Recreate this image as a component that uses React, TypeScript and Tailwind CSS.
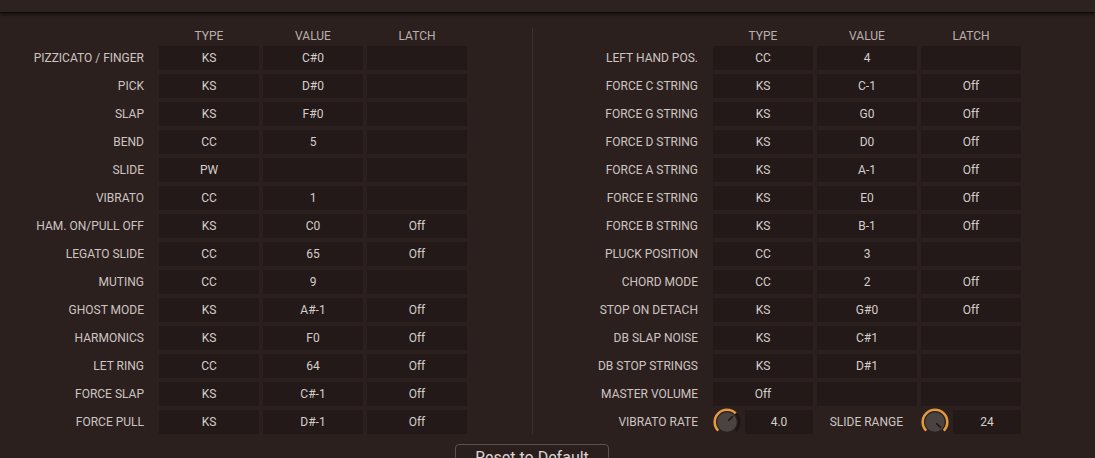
import React from "react";

type Row = { label: string; type: string; value: string; latch: string };

const leftRows: Row[] = [
  { label: "PIZZICATO / FINGER", type: "KS", value: "C#0", latch: "" },
  { label: "PICK", type: "KS", value: "D#0", latch: "" },
  { label: "SLAP", type: "KS", value: "F#0", latch: "" },
  { label: "BEND", type: "CC", value: "5", latch: "" },
  { label: "SLIDE", type: "PW", value: "", latch: "" },
  { label: "VIBRATO", type: "CC", value: "1", latch: "" },
  { label: "HAM. ON/PULL OFF", type: "KS", value: "C0", latch: "Off" },
  { label: "LEGATO SLIDE", type: "CC", value: "65", latch: "Off" },
  { label: "MUTING", type: "CC", value: "9", latch: "" },
  { label: "GHOST MODE", type: "KS", value: "A#-1", latch: "Off" },
  { label: "HARMONICS", type: "KS", value: "F0", latch: "Off" },
  { label: "LET RING", type: "CC", value: "64", latch: "Off" },
  { label: "FORCE SLAP", type: "KS", value: "C#-1", latch: "Off" },
  { label: "FORCE PULL", type: "KS", value: "D#-1", latch: "Off" },
];

const rightRows: Row[] = [
  { label: "LEFT HAND POS.", type: "CC", value: "4", latch: "" },
  { label: "FORCE C STRING", type: "KS", value: "C-1", latch: "Off" },
  { label: "FORCE G STRING", type: "KS", value: "G0", latch: "Off" },
  { label: "FORCE D STRING", type: "KS", value: "D0", latch: "Off" },
  { label: "FORCE A STRING", type: "KS", value: "A-1", latch: "Off" },
  { label: "FORCE E STRING", type: "KS", value: "E0", latch: "Off" },
  { label: "FORCE B STRING", type: "KS", value: "B-1", latch: "Off" },
  { label: "PLUCK POSITION", type: "CC", value: "3", latch: "" },
  { label: "CHORD MODE", type: "CC", value: "2", latch: "Off" },
  { label: "STOP ON DETACH", type: "KS", value: "G#0", latch: "Off" },
  { label: "DB SLAP NOISE", type: "KS", value: "C#1", latch: "" },
  { label: "DB STOP STRINGS", type: "KS", value: "D#1", latch: "" },
  { label: "MASTER VOLUME", type: "Off", value: "", latch: "" },
];

function Cell({ children, w = "w-[100px]" }: { children?: React.ReactNode; w?: string }) {
  return (
    <div className={`${w} h-[24px] flex items-center justify-center bg-[#221918] text-[12px] text-[#d6cecb]`}>
      {children}
    </div>
  );
}

// arc angle measured clockwise from 12 o'clock, range -135..135
function Knob({ frac }: { frac: number }) {
  const c = 14;
  const r = 12.3;
  const pt = (deg: number, rad: number) => {
    const a = (deg * Math.PI) / 180;
    return [c + rad * Math.sin(a), c - rad * Math.cos(a)];
  };
  const end = -135 + 270 * frac;
  const [sx, sy] = pt(-135, r);
  const [ex, ey] = pt(end, r);
  const [tx, ty] = pt(135, r);
  const large = end - -135 > 180 ? 1 : 0;
  const [l1x, l1y] = pt(end, 2.5);
  const [l2x, l2y] = pt(end, 7.5);
  return (
    <svg width="28" height="28" viewBox="0 0 28 28" className="shrink-0">
      <path d={`M ${sx} ${sy} A ${r} ${r} 0 1 1 ${tx} ${ty}`} fill="none" stroke="#1e1615" strokeWidth="2.6" />
      <path d={`M ${sx} ${sy} A ${r} ${r} 0 ${large} 1 ${ex} ${ey}`} fill="none" stroke="#e2993f" strokeWidth="2.6" strokeLinecap="butt" />
      <circle cx={c} cy={c} r="9.8" fill="#4a4341" />
      <line x1={l1x} y1={l1y} x2={l2x} y2={l2y} stroke="#1a1312" strokeWidth="1.6" strokeLinecap="round" />
    </svg>
  );
}

function Header({ labelW }: { labelW: string }) {
  return (
    <div className="flex h-[16px] items-center text-[12px] text-[#b9b1ae]">
      <div className={`${labelW} mr-[15px]`} />
      <div className="flex gap-[4px]">
        <div className="w-[100px] text-center">TYPE</div>
        <div className="w-[100px] text-center">VALUE</div>
        <div className="w-[100px] text-center">LATCH</div>
      </div>
    </div>
  );
}

function TableRow({ row, labelW }: { row: Row; labelW: string }) {
  return (
    <div className="flex h-[24px] items-center">
      <div className={`${labelW} mr-[15px] text-right text-[12px] text-[#cdc5c2] whitespace-nowrap`}>{row.label}</div>
      <div className="flex gap-[4px]">
        <Cell>{row.type}</Cell>
        <Cell>{row.value}</Cell>
        <Cell>{row.latch}</Cell>
      </div>
    </div>
  );
}

export default function App() {
  return (
    <div
      className="h-[458px] w-[1095px] overflow-hidden bg-[#2b201e]"
      style={{ fontFamily: "Roboto, 'Liberation Sans', sans-serif" }}
    >
      <div className="h-[13px] bg-[#2c2220] border-b-[1.5px] border-[#0f0908] shadow-[0_2px_3px_rgba(0,0,0,0.45)]" />
      <div className="flex pt-[15px]">
        {/* left table */}
        <div className="flex flex-col w-[467px]">
          <Header labelW="w-[144px]" />
          <div className="mt-[2px] flex flex-col gap-[4px]">
            {leftRows.map((r) => (
              <TableRow key={r.label} row={r} labelW="w-[144px]" />
            ))}
          </div>
        </div>
        <div className="ml-[65px] w-px bg-[#3b302e]" />
        {/* right table */}
        <div className="flex flex-col pl-[7px]">
          <Header labelW="w-[158px]" />
          <div className="mt-[2px] flex flex-col gap-[4px]">
            {rightRows.map((r) => (
              <TableRow key={r.label} row={r} labelW="w-[158px]" />
            ))}
            <div className="flex h-[24px] items-center">
              <div className="w-[158px] mr-[15px] text-right text-[12px] text-[#cdc5c2] whitespace-nowrap">VIBRATO RATE</div>
              <div className="flex items-center gap-[4px]">
                <div className="flex w-[100px] items-center gap-[4px]">
                  <Knob frac={0.667} />
                  <Cell w="w-[68px]">4.0</Cell>
                </div>
                <div className="w-[100px] pr-[14px] text-right text-[12px] text-[#cdc5c2] whitespace-nowrap">SLIDE RANGE</div>
                <div className="flex w-[100px] items-center gap-[4px]">
                  <Knob frac={1} />
                  <Cell w="w-[68px]">24</Cell>
                </div>
              </div>
            </div>
          </div>
        </div>
      </div>
      <div className="pl-[455px] pt-[10px]">
        <button className="w-[154px] h-[28px] rounded-[4px] border border-[#5b5250] bg-[#2a1f1d] text-[16px] leading-[20px] text-[#dcd5d2] flex justify-center pt-[3px]">
          Reset to Default
        </button>
      </div>
    </div>
  );
}
